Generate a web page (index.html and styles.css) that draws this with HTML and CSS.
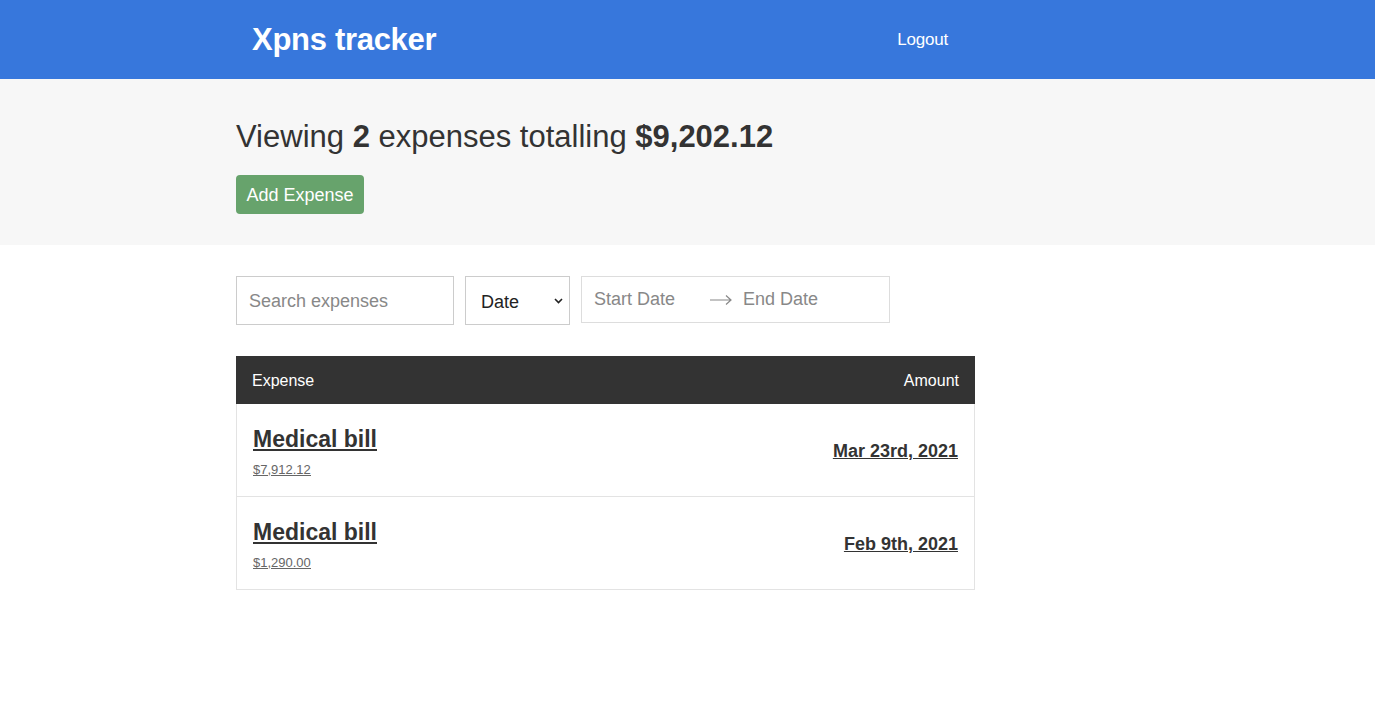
FILE: index.html
```html
<!DOCTYPE html>
<html>
<head>
<meta charset="utf-8">
<link rel="stylesheet" href="styles.css">
</head>
<body>
<header class="header">
  <div class="container header-inner">
    <h1 class="logo">Xpns tracker</h1>
    <button class="logout">Logout</button>
  </div>
</header>
<section class="summary">
  <div class="container">
    <h2 class="summary-title">Viewing <b>2</b> expenses totalling <b>$9,202.12</b></h2>
    <button class="btn-add">Add Expense</button>
  </div>
</section>
<main class="container">
  <div class="filters">
    <input class="search" type="text" placeholder="Search expenses">
    <div class="select"><span>Date</span><svg width="9" height="6" viewBox="0 0 9 6"><path d="M1 1l3.5 3.5L8 1" fill="none" stroke="#222" stroke-width="1.6"/></svg></div>
    <div class="range"><span>Start Date</span><svg class="arrow" width="24" height="12" viewBox="0 0 24 12"><path d="M1 6h21M17 1.5L22 6l-5 4.5" fill="none" stroke="#888" stroke-width="1.2"/></svg><span>End Date</span></div>
  </div>
  <div class="table">
    <div class="thead"><span>Expense</span><span>Amount</span></div>
    <a class="row" href="#">
      <div><div class="name">Medical bill</div><div class="amount">$7,912.12</div></div>
      <div class="date">Mar 23rd, 2021</div>
    </a>
    <a class="row" href="#">
      <div><div class="name">Medical bill</div><div class="amount">$1,290.00</div></div>
      <div class="date">Feb 9th, 2021</div>
    </a>
  </div>
</main>
</body>
</html>
```
FILE: styles.css
```css
* { box-sizing: border-box; }
body { margin: 0; font-family: "Liberation Sans", Arial, sans-serif; color: #333; background: #fff; }
.container { width: 739px; margin-left: 236px; }
.header { background: #3777dc; height: 79px; }
.header-inner { height: 79px; display: flex; align-items: center; justify-content: space-between; padding: 1px 16px 0; }
.logo { margin: 0; font-size: 31px; font-weight: bold; color: #fff; letter-spacing: -0.3px; }
.logout { background: none; border: none; color: #fff; font-family: inherit; font-size: 17px; padding: 0 11px 0 0; letter-spacing: -0.2px; }
.summary { background: #f7f7f7; height: 166px; padding-top: 39px; }
.summary-title { margin: 0; font-size: 31px; font-weight: 300; color: #333; line-height: 1.2; }
.summary-title b { font-weight: bold; }
.btn-add { margin-top: 20px; background: #67a36c; color: #fff; border: none; border-radius: 4px; font-family: inherit; font-size: 18px; height: 39px; width: 128px; padding: 2px 0 0; }
.filters { display: flex; align-items: flex-start; gap: 11px; margin-top: 31px; }
.search { width: 218px; height: 49px; border: 1px solid #ccc; padding: 2px 12px 0; font-family: inherit; font-size: 18px; outline: none; }
.search::placeholder { color: #888; }
.select { width: 105px; height: 49px; border: 1px solid #ccc; display: flex; align-items: center; justify-content: space-between; padding: 0 6px 0 15px; font-size: 18px; color: #222; }
.select span { padding-top: 3px; }
.range { width: 309px; height: 47px; border: 1px solid #ddd; display: flex; align-items: center; padding: 0 12px; font-size: 18px; color: #888; }
.arrow { margin: 0 10px 0 34px; }
.table { margin-top: 31px; border: 1px solid #e3e3e3; border-top: none; }
.thead { background: #333; color: #fff; height: 48px; display: flex; align-items: center; justify-content: space-between; padding: 1px 16px 0; font-size: 16px; margin: 0 -1px; }
.row { display: flex; justify-content: space-between; align-items: center; height: 93px; padding: 2px 16px 0; color: #333; text-decoration: underline; border-bottom: 1px solid #e3e3e3; }
.row:last-child { border-bottom: none; height: 92px; }
.name { font-size: 23px; font-weight: bold; margin-bottom: 9px; text-decoration: underline; }
.amount { font-size: 13px; color: #666; text-decoration: underline; }
.date { font-size: 18px; font-weight: bold; text-decoration: underline; }
```
